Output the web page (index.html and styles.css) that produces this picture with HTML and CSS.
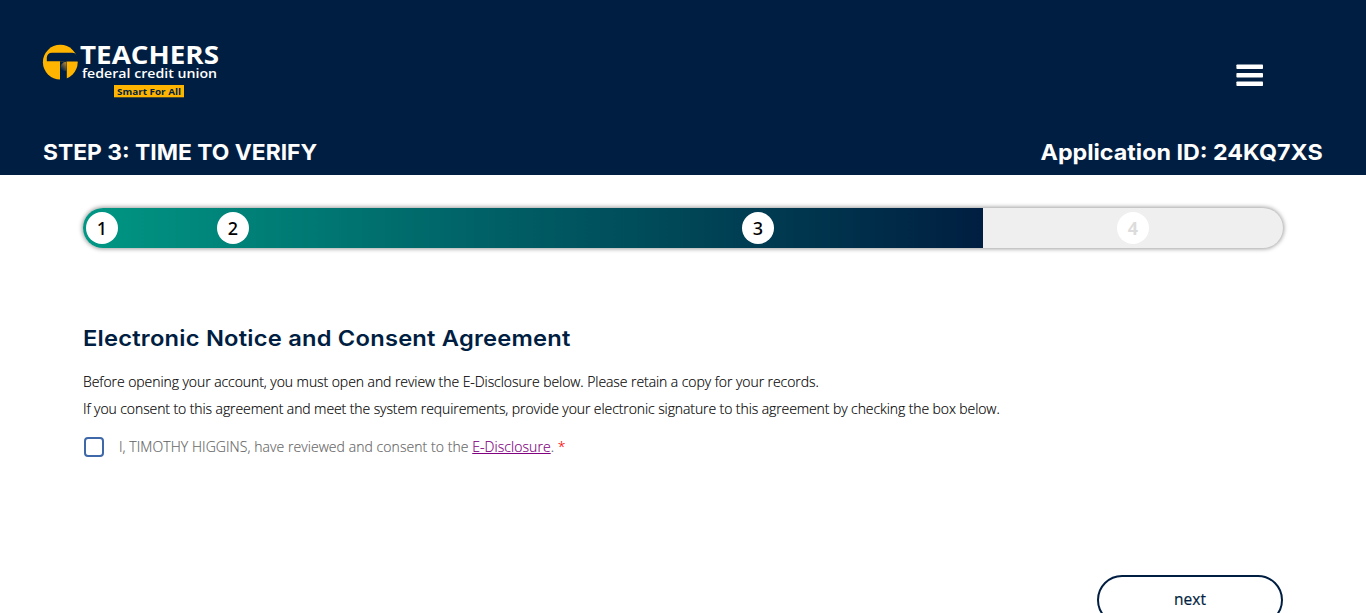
FILE: index.html
```html
<!DOCTYPE html>
<html lang="en">
<head>
<meta charset="utf-8">
<title>Teachers Federal Credit Union</title>
<link rel="stylesheet" href="styles.css">
</head>
<body>
<header class="header">
  <div class="brand-row">
    <svg class="logo" width="178" height="56" viewBox="0 0 178 56" role="img" aria-label="Teachers Federal Credit Union">
      <defs>
        <linearGradient id="stem" x1="0" y1="1" x2="0.7" y2="0">
          <stop offset="0.2" stop-color="#001e41"/>
          <stop offset="1" stop-color="#a98038"/>
        </linearGradient>
      </defs>
      <circle cx="17.3" cy="18.2" r="17.4" fill="#ffb500"/>
      <path d="M3.800 17.200V13.500Q4.300 8.800 9 8.800H29.500Q34.500 8.800 36 17.400H22Q17.500 18.500 17 24V37H23.500V17.200Z" fill="#001e41"/>
      <path d="M17 17.200H23.600V36H17Z" fill="#001e41"/>
      <path d="M17 26Q17.300 18 23.500 17.800V27H17Z" fill="url(#stem)"/>
      <text class="logo-name" x="37" y="20" textLength="139" lengthAdjust="spacingAndGlyphs">TEACHERS</text>
      <text class="logo-sub" x="39" y="33.600" textLength="135" lengthAdjust="spacingAndGlyphs">federal credit union</text>
      <rect x="71" y="41" width="70" height="12.300" fill="#ffb500"/>
      <text class="logo-tag" x="74" y="50.800" textLength="64" lengthAdjust="spacingAndGlyphs">Smart For All</text>
    </svg>
    <button class="menu" aria-label="Menu">
      <svg width="28" height="24" viewBox="0 0 28 24"><g fill="#fff"><rect x="0.400" y="0.400" width="26.600" height="4.600" rx="0.800"/><rect x="0.400" y="9" width="26.600" height="4.600" rx="0.800"/><rect x="0.400" y="17.500" width="26.600" height="4.600" rx="0.800"/></g></svg>
    </button>
  </div>
  <div class="title-row">
    <span class="step-title">STEP 3: TIME TO VERIFY</span>
    <span class="app-id">Application ID: 24KQ7XS</span>
  </div>
</header>
<main class="main">
  <div class="progress">
    <div class="fill">
      <span class="dot">1</span>
      <span class="dot">2</span>
      <span class="dot">3</span>
    </div>
    <div class="rest"><span class="dot pending">4</span></div>
  </div>
  <h1 class="heading">Electronic Notice and Consent Agreement</h1>
  <p class="text line-review">Before opening your account, you must open and review the E-Disclosure below. Please retain a copy for your records.</p>
  <p class="text line-consent">If you consent to this agreement and meet the system requirements, provide your electronic signature to this agreement by checking the box below.</p>
  <label class="consent">
    <input class="check" type="checkbox">
    <span>I, TIMOTHY HIGGINS, have reviewed and consent to the <a class="link" href="#">E-Disclosure</a>. <span class="required">*</span></span>
  </label>
  <div class="actions"><button class="next">next</button></div>
</main>
</body>
</html>
```

FILE: styles.css
```css
* { box-sizing: border-box; }
html { overflow: hidden; }
body {
  margin: 0;
  background: #fff;
  color: #000;
  font-family: "Open Sans", sans-serif;
  font-size: 14px;
}
.header {
  height: 175px;
  padding: 44px 43px 0;
  background: #001e41;
  color: #fff;
}
.brand-row {
  display: flex;
  justify-content: space-between;
  align-items: flex-start;
  height: 94px;
}
.logo { display: block; overflow: visible; }
.logo-name { font: 700 24.5px "Open Sans", sans-serif; fill: #fff; }
.logo-sub { font: 600 13px "Open Sans", sans-serif; fill: #fff; }
.logo-tag { font: 700 9.5px "Open Sans", sans-serif; fill: #001e41; }
.menu {
  display: flex;
  margin: 20px 59px 0 0;
  padding: 0;
  border: 0;
  background: none;
}
.title-row {
  display: flex;
  justify-content: space-between;
  font: 700 22px/28px Inter, sans-serif;
}
.step-title {
  transform: scaleX(1.038);
  transform-origin: left;
}
.app-id {
  transform: scaleX(1.058);
  transform-origin: right;
}
.main { padding: 33px 83px 0; }
.progress {
  display: flex;
  height: 40px;
  border-radius: 20px;
  overflow: hidden;
  background: #efefef;
  box-shadow: 0 0 4px 1px rgba(0, 0, 0, 0.38);
}
.fill {
  display: grid;
  grid-template-columns: 131px 525px auto;
  align-items: center;
  width: 900px;
  padding-left: 3px;
  background: linear-gradient(90deg, #009784, #001e41);
}
.rest {
  display: flex;
  flex: 1;
  align-items: center;
  justify-content: center;
}
.dot {
  width: 32px;
  height: 32px;
  border-radius: 50%;
  background: #fff;
  color: #000;
  font: 500 18px/32px "Noto Sans", sans-serif;
  text-align: center;
}
.pending { color: #dcdcdc; font-weight: 700; }
.heading {
  width: max-content;
  margin: 76px 0 0;
  color: #001e41;
  font: 600 22px/28px Inter, sans-serif;
  letter-spacing: 0.2px;
  transform: scaleX(1.077);
  transform-origin: left;
}
.text {
  margin: 0;
  font-weight: 300;
  line-height: 27px;
  white-space: nowrap;
  -webkit-text-stroke: 0.15px currentColor;
}
.line-review { margin-top: 16px; letter-spacing: -0.067px; }
.line-consent { letter-spacing: -0.09px; }
.consent {
  display: flex;
  align-items: center;
  gap: 15px;
  margin: 11px 0 0 1px;
  height: 27px;
  color: #666;
  font-weight: 300;
  letter-spacing: 0.06px;
  -webkit-text-stroke: 0.15px currentColor;
}
.check {
  appearance: none;
  width: 20px;
  height: 20px;
  margin: 0;
  border: 2px solid #3f68a8;
  border-radius: 4px;
  background: #fff;
}
.link { color: #800080; }
.required { color: #f00; }
.actions {
  display: flex;
  justify-content: flex-end;
  margin-top: 115px;
}
.next {
  width: 186px;
  height: 50px;
  border: 2px solid #001e41;
  border-radius: 25px;
  background: #fff;
  color: #001e41;
  font: 400 15.5px/44px "Open Sans", sans-serif;
  padding: 0 0 2px;
  -webkit-text-stroke: 0.2px currentColor;
}
```
